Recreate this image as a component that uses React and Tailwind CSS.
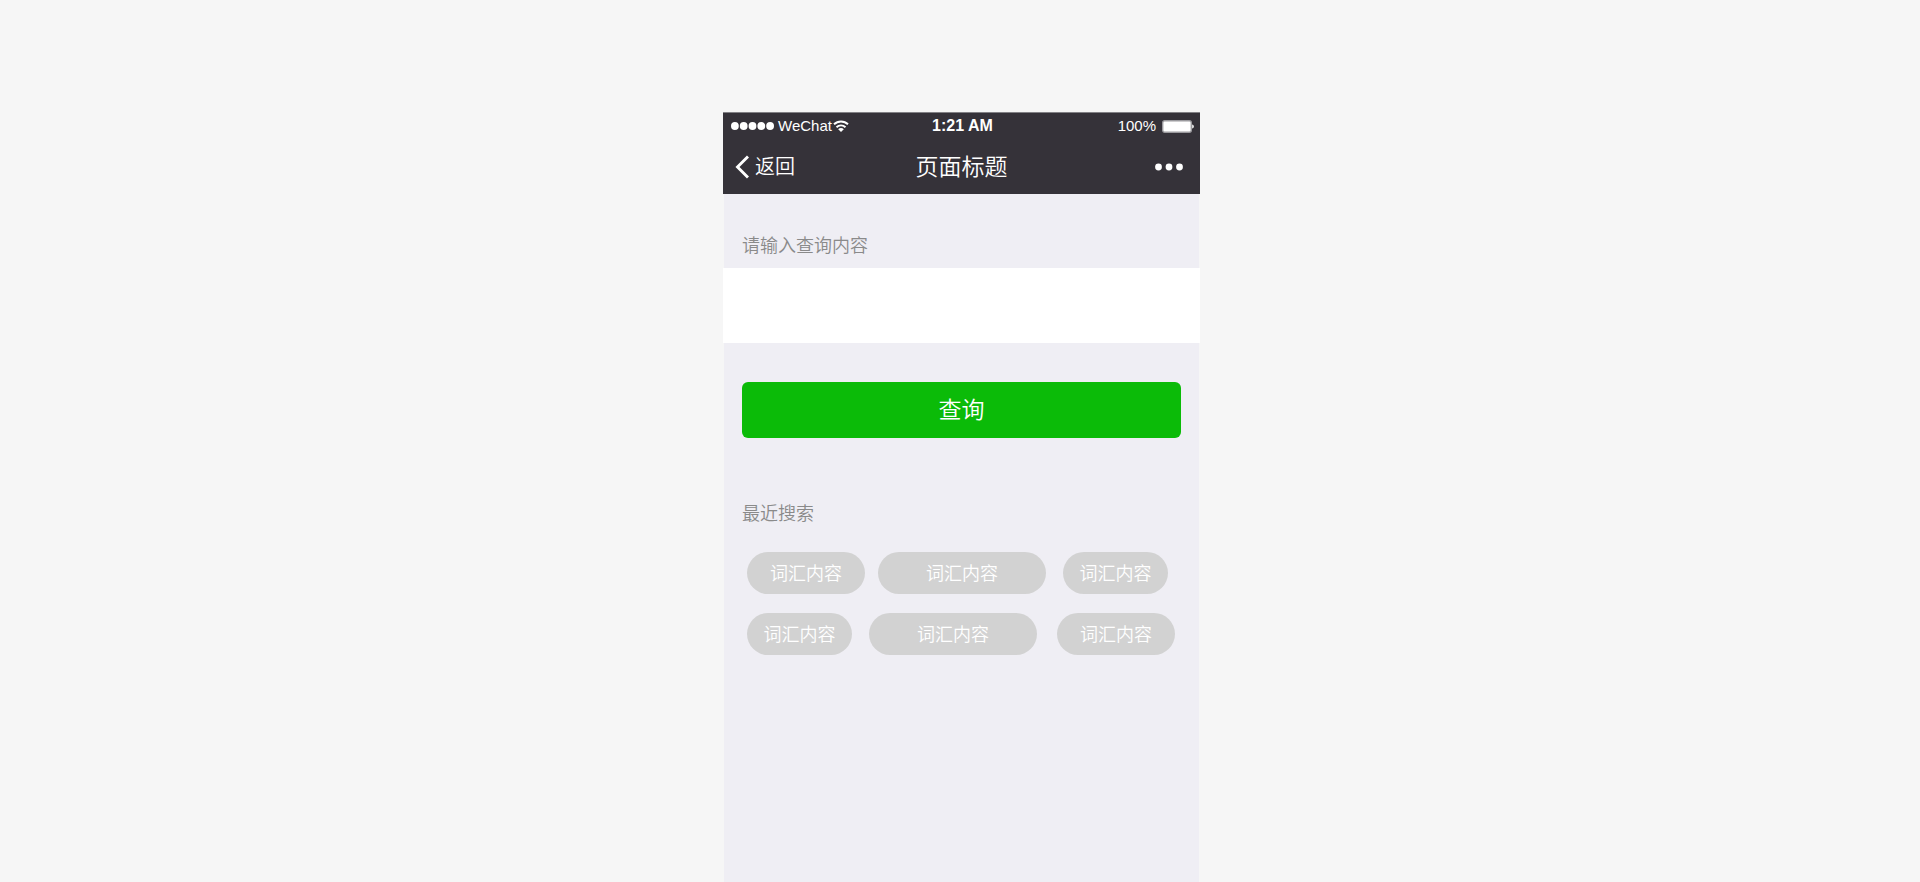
import React, { useState } from "react";

const rows = [
  {
    id: "first",
    chips: [
      { id: 1, label: "词汇内容", className: "w-[118px]" },
      { id: 2, label: "词汇内容", className: "w-[168px] ml-[13px]" },
      { id: 3, label: "词汇内容", className: "w-[105px] ml-[17px]" },
    ],
  },
  {
    id: "second",
    chips: [
      { id: 4, label: "词汇内容", className: "w-[105px]" },
      { id: 5, label: "词汇内容", className: "w-[168px] ml-[17px]" },
      { id: 6, label: "词汇内容", className: "w-[118px] ml-5" },
    ],
  },
];

const SignalDots = () => (
  <svg width="43" height="10" viewBox="0 0 43 10" fill="#fff" aria-hidden="true">
    {[3.9, 12.7, 21.5, 30.3, 39.1].map((cx) => (
      <circle key={cx} cx={cx} cy="5" r="3.9" />
    ))}
  </svg>
);

const WifiIcon = () => (
  <svg width="16" height="12" viewBox="0 0 16 12" fill="none" aria-hidden="true">
    <path d="M1 4.300a10 10 0 0 1 14 0" stroke="#fff" strokeWidth="1.9" />
    <path d="M3.500 7.200a6.400 6.400 0 0 1 9 0" stroke="#fff" strokeWidth="1.9" />
    <path d="M8 12 5.200 9.200a3.900 3.900 0 0 1 5.600 0z" fill="#fff" />
  </svg>
);

const BatteryIcon = () => (
  <svg width="32" height="13" viewBox="0 0 32 13" aria-hidden="true">
    <rect x="0.7" y="0.7" width="28.6" height="11.6" rx="2" fill="#fff" stroke="#9b9a9e" strokeWidth="1.4" />
    <path d="M30.200 4.500c1 .2 1.600 1 1.600 2s-.6 1.800-1.600 2z" fill="#fff" />
  </svg>
);

const StatusBar = () => (
  <div className="grid h-[27px] grid-cols-[1fr_auto_1fr] items-center border-t border-[#828185] pl-2 pr-[6px] font-['Liberation_Sans',Arial,sans-serif] text-[15px] font-normal leading-5">
    <div className="flex items-center">
      <SignalDots />
      <span className="ml-1">WeChat</span>
      <span className="ml-px">
        <WifiIcon />
      </span>
    </div>
    <span className="text-base font-bold leading-5">1:21 AM</span>
    <div className="flex items-center justify-end gap-[6px]">
      <span>100%</span>
      <BatteryIcon />
    </div>
  </div>
);

const NavBar = () => (
  <nav className="grid h-[55px] grid-cols-[1fr_auto_1fr] items-center px-3">
    <a href="#back" className="flex items-center gap-[6px] text-xl leading-7">
      <svg width="14" height="24" viewBox="0 0 14 24" fill="none" aria-hidden="true">
        <path d="M13 1.500 2.500 12 13 22.500" stroke="#fff" strokeWidth="2.900" />
      </svg>
      <span className="pb-[2px]">返回</span>
    </a>
    <h1 className="pb-1 text-[23px] font-[350] leading-8">页面标题</h1>
    <button type="button" aria-label="更多" className="cursor-pointer justify-self-end">
      <svg width="34" height="8" viewBox="0 0 34 8" fill="#fff" aria-hidden="true">
        <circle cx="4.500" cy="4" r="3.400" />
        <circle cx="15" cy="4" r="3.400" />
        <circle cx="25.500" cy="4" r="3.400" />
      </svg>
    </button>
  </nav>
);

const App = () => {
  const [keyword, setKeyword] = useState("");

  return (
    <div className="flex min-h-screen flex-col items-center bg-[#f6f6f6] pl-[3px] pt-28 font-['Noto_Sans_CJK_SC',sans-serif] font-[350]">
      <main className="flex w-full max-w-[477px] grow flex-col bg-[#efeef4] shadow-[inset_1px_0_#f6f6f6,inset_-1px_0_#f6f6f6]">
        <header className="bg-[#353239] text-white">
          <StatusBar />
          <NavBar />
        </header>

        <form onSubmit={(e) => e.preventDefault()}>
          <label
            htmlFor="keyword"
            className="block px-[19px] pb-[6px] pt-8 text-lg leading-9 text-[#8a8a8a]"
          >
            请输入查询内容
          </label>
          <input
            id="keyword"
            type="text"
            value={keyword}
            onChange={(e) => setKeyword(e.target.value)}
            className="block h-[75px] w-full bg-white px-[19px] text-lg focus:outline-0"
          />
          <div className="px-[19px] pt-[39px]">
            <button
              type="submit"
              className="block h-14 w-full cursor-pointer rounded-md bg-[#0bbb08] pb-1 text-[23px] leading-8 text-white"
            >
              查询
            </button>
          </div>
        </form>

        <section className="px-[19px] pt-14">
          <h2 className="text-lg font-[350] leading-9 text-[#8a8a8a]">最近搜索</h2>
          <div className="mt-[22px] flex flex-col gap-[19px] pl-[5px]">
            {rows.map((row) => (
              <div key={row.id} className="flex">
                {row.chips.map((chip) => (
                  <button
                    key={chip.id}
                    type="button"
                    onClick={() => setKeyword(chip.label)}
                    className={`h-[42px] cursor-pointer rounded-full bg-[#d2d2d2] pb-[2px] text-lg leading-7 text-white ${chip.className}`}
                  >
                    {chip.label}
                  </button>
                ))}
              </div>
            ))}
          </div>
        </section>
      </main>
    </div>
  );
};

export default App;
